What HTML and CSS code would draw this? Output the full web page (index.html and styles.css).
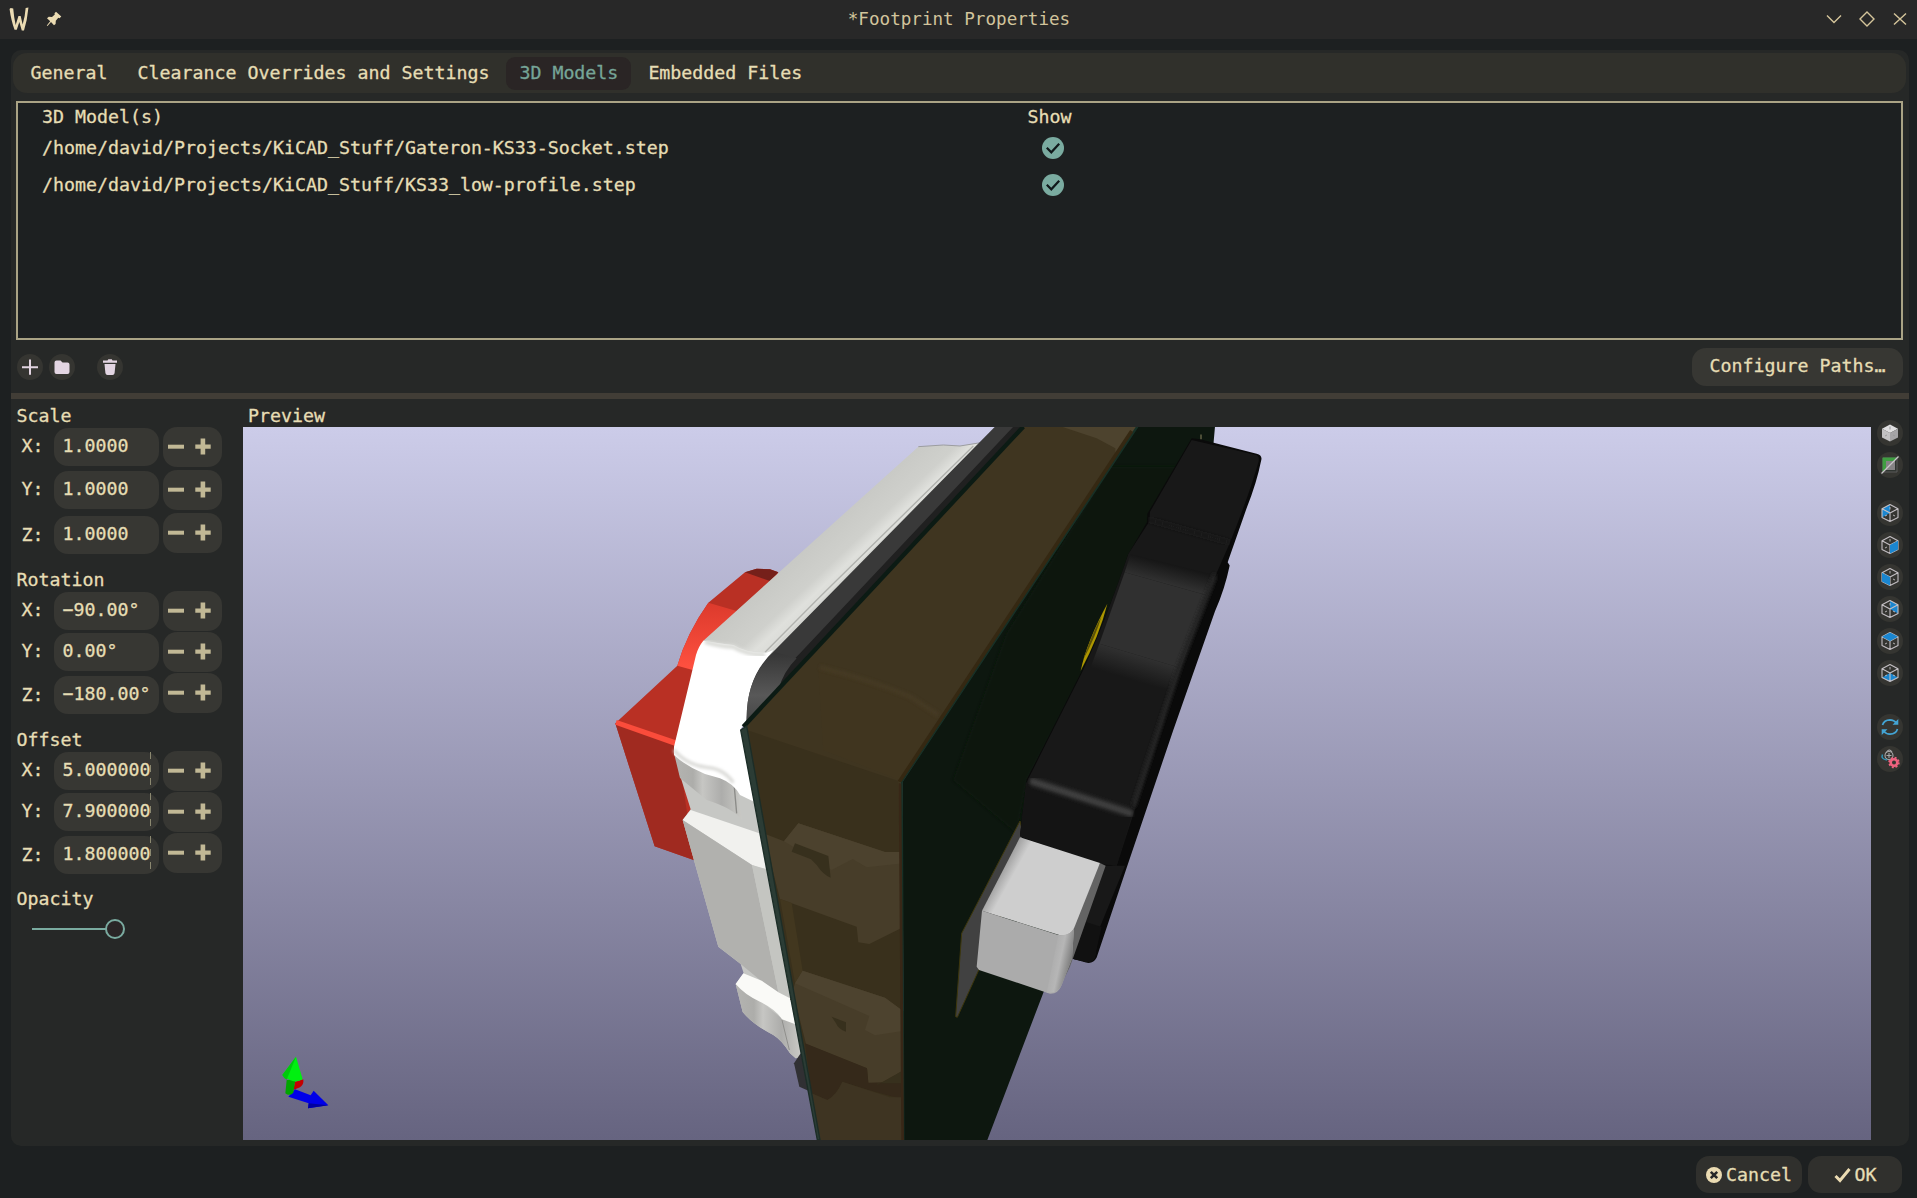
FILE: index.html
```html
<!DOCTYPE html>
<html lang="en">
<head>
<meta charset="utf-8">
<title>Footprint Properties</title>
<link rel="stylesheet" href="styles.css">
</head>
<body>
<svg class="defs" width="0" height="0">
  <defs>
    <g id="wire" fill="none" stroke="#c3bfc3" stroke-width="1.1" stroke-linejoin="round">
      <path d="M9 1L17 5.2V14L9 18L1 14V5.2ZM1 5.2L9 9.5L17 5.2M9 9.5V18"/>
      <path d="M9 3.500V6M4 12.500L6 11.500M12 11.500L14 12.500" stroke-width=".9"/>
    </g>
    <g id="minus"><path d="M0 6.7H16V10.7H0Z"/></g>
    <g id="plus"><path d="M5.6 0.5H10.2V6.5H15.7V10.7H10.2V16.5H5.6V10.7H.3V6.5H5.6Z"/></g>
  </defs>
</svg>
<header class="titlebar">
  <div class="title-left">
    <svg width="20" height="25" viewBox="0 0 18 25" preserveAspectRatio="none"><path d="M1.500 1L3.800 1.500Q4.500 11 6 18L8.500 9H10.500L12.300 17.500Q14.500 9 15 1L17.500 .5Q16.500 13 13.500 23.500H11.500L9.300 15L7 22.800H5Q2 14 .5 2Z" fill="#ebdbb2"/></svg>
    <svg width="16" height="16" viewBox="0 0 16 16"><path d="M10 .7L15.300 5.500L13.500 7.200L12.300 6.800L9.800 9.700L9.600 13L8 14.200L5 11L1.500 15L.8 14.500L4.200 10.300L1 7.300L2.800 5.800L6 6L8.800 3.400L8.500 2.200Z" fill="#ebdbb2"/></svg>
  </div>
  <h1>*Footprint Properties</h1>
  <div class="title-right">
    <svg width="16" height="16" viewBox="0 0 16 16"><path d="M1 4.500L8 11.500L15 4.500"/></svg>
    <svg width="16" height="16" viewBox="0 0 16 16"><path d="M8 1L15 8L8 15L1 8Z"/></svg>
    <svg width="16" height="16" viewBox="0 0 16 16"><path d="M2 2.500L14 13.500M14 2.500L2 13.500"/></svg>
  </div>
</header>
<main class="notebook">
  <nav class="tabs">
    <span class="tab">General</span>
    <span class="tab">Clearance Overrides and Settings</span>
    <span class="tab active">3D Models</span>
    <span class="tab">Embedded Files</span>
  </nav>
  <section class="models">
    <div class="mrow head"><span>3D Model(s)</span><span>Show</span></div>
    <div class="mrow"><span>/home/david/Projects/KiCAD_Stuff/Gateron-KS33-Socket.step</span><svg class="check" viewBox="0 0 22 22"><circle cx="11" cy="11" r="11"/><path d="M4.800 10.800L9.300 15.300L17.200 6.800"/></svg></div>
    <div class="mrow"><span>/home/david/Projects/KiCAD_Stuff/KS33_low-profile.step</span><svg class="check" viewBox="0 0 22 22"><circle cx="11" cy="11" r="11"/><path d="M4.800 10.800L9.300 15.300L17.200 6.800"/></svg></div>
  </section>
  <section class="actions">
    <button class="round"><svg viewBox="0 0 26 26"><path d="M12 5.500H14V12.200H21V14.200H14V20.800H12V14.200H5V12.200H12Z"/></svg></button>
    <button class="round"><svg viewBox="0 0 26 26"><path d="M5.500 8.500Q5.500 6.500 7.500 6.500H11.500L13.500 8.500H18.500Q20.500 8.500 20.500 10.500V18Q20.500 20 18.500 20H7.500Q5.500 20 5.500 18Z"/></svg></button>
    <button class="round trash"><svg viewBox="0 0 26 26"><path d="M6 6.500H10.500L11.300 5.200H14.800L15.500 6.500H20V8.800H6ZM7.500 10H18.500L17.600 19Q17.400 21 15.500 21H10.500Q8.600 21 8.400 19Z"/></svg></button>
    <button class="configure">Configure Paths…</button>
  </section>
  <div class="sash"></div>
  <section class="lower">
    <aside class="params">
      <h2>Scale</h2>
      <div class="group scale">
        <div class="prow"><label>X:</label><div class="field">1.0000</div><div class="spin"><svg viewBox="0 0 16 17"><use href="#minus"/></svg><svg viewBox="0 0 16 17"><use href="#plus"/></svg></div></div>
        <div class="prow"><label>Y:</label><div class="field">1.0000</div><div class="spin"><svg viewBox="0 0 16 17"><use href="#minus"/></svg><svg viewBox="0 0 16 17"><use href="#plus"/></svg></div></div>
        <div class="prow last"><label>Z:</label><div class="field">1.0000</div><div class="spin"><svg viewBox="0 0 16 17"><use href="#minus"/></svg><svg viewBox="0 0 16 17"><use href="#plus"/></svg></div></div>
      </div>
      <h2>Rotation</h2>
      <div class="group">
        <div class="prow"><label>X:</label><div class="field">−90.00°</div><div class="spin"><svg viewBox="0 0 16 17"><use href="#minus"/></svg><svg viewBox="0 0 16 17"><use href="#plus"/></svg></div></div>
        <div class="prow"><label>Y:</label><div class="field">0.00°</div><div class="spin"><svg viewBox="0 0 16 17"><use href="#minus"/></svg><svg viewBox="0 0 16 17"><use href="#plus"/></svg></div></div>
        <div class="prow last"><label>Z:</label><div class="field">−180.00°</div><div class="spin"><svg viewBox="0 0 16 17"><use href="#minus"/></svg><svg viewBox="0 0 16 17"><use href="#plus"/></svg></div></div>
      </div>
      <h2>Offset</h2>
      <div class="group">
        <div class="prow"><label>X:</label><div class="field clip">5.000000</div><div class="spin"><svg viewBox="0 0 16 17"><use href="#minus"/></svg><svg viewBox="0 0 16 17"><use href="#plus"/></svg></div></div>
        <div class="prow"><label>Y:</label><div class="field clip">7.900000</div><div class="spin"><svg viewBox="0 0 16 17"><use href="#minus"/></svg><svg viewBox="0 0 16 17"><use href="#plus"/></svg></div></div>
        <div class="prow last"><label>Z:</label><div class="field clip">1.800000</div><div class="spin"><svg viewBox="0 0 16 17"><use href="#minus"/></svg><svg viewBox="0 0 16 17"><use href="#plus"/></svg></div></div>
      </div>
      <h2>Opacity</h2>
      <div class="slider"><i class="track"></i><i class="knob"></i></div>
    </aside>
    <div class="preview">
      <h2>Preview</h2>
      <svg class="scene" viewBox="243 427 1628 713" preserveAspectRatio="none">
        <defs>
          <linearGradient id="sky" x1="0" y1="0" x2="0" y2="1"><stop offset="0" stop-color="#cccce9"/><stop offset="1" stop-color="#666480"/></linearGradient>
          <linearGradient id="ridge" gradientUnits="userSpaceOnUse" x1="690" y1="340" x2="850" y2="510"><stop offset="0" stop-color="#c8c9c5"/><stop offset=".38" stop-color="#cfd0cc"/><stop offset=".52" stop-color="#dfe0dc"/><stop offset=".75" stop-color="#d8d9d5"/><stop offset="1" stop-color="#c2c3bf"/></linearGradient>
          <linearGradient id="cap" x1="0" y1="0" x2="0" y2="1"><stop offset="0" stop-color="#dc3a2c"/><stop offset="1" stop-color="#ff5140"/></linearGradient>
          <linearGradient id="fold" x1="0" y1="0" x2="1" y2="0"><stop offset="0" stop-color="#b4b4b1"/><stop offset=".28" stop-color="#adadaa"/><stop offset=".42" stop-color="#c6c6c3"/><stop offset=".7" stop-color="#adadab"/><stop offset="1" stop-color="#c9c9c5"/></linearGradient>
          <linearGradient id="bend" x1="0" y1="0" x2="0" y2="1"><stop offset="0" stop-color="#353535"/><stop offset=".6" stop-color="#585858"/><stop offset="1" stop-color="#454545"/></linearGradient>
          <linearGradient id="fadeup" gradientUnits="userSpaceOnUse" x1="518" y1="378" x2="507" y2="428"><stop offset="0" stop-color="#161616"/><stop offset="1" stop-color="#303030"/></linearGradient>
          <linearGradient id="fadedown" gradientUnits="userSpaceOnUse" x1="420" y1="616" x2="403" y2="681"><stop offset="0" stop-color="#303030"/><stop offset="1" stop-color="#181818"/></linearGradient>
          <linearGradient id="prongtop" gradientUnits="userSpaceOnUse" x1="1225" y1="1340" x2="1270" y2="1365"><stop offset="0" stop-color="#8e8e8e"/><stop offset="1" stop-color="#cecece"/></linearGradient>
          <linearGradient id="prongside" gradientUnits="userSpaceOnUse" x1="1370" y1="1640" x2="1440" y2="1655"><stop offset="0" stop-color="#a9a9a9"/><stop offset=".5" stop-color="#b6b6b6"/><stop offset="1" stop-color="#777"/></linearGradient>
          <filter id="soft"><feGaussianBlur stdDeviation="5"/></filter>
        </defs>
        <rect x="243" y="427" width="1628" height="713" fill="url(#sky)"/>
        <g transform="translate(590 420) scale(.33333)">
          <!-- red key stem -->
          <path d="M262 737Q290 640 355 548L465 457L500 446L540 448L565 457L420 760L400 1300L311 1320L194 1279L76 910Z" fill="#b93024"/>
          <path d="M465 457L500 446L540 448L565 457L540 483Z" fill="#75201a"/>
          <path d="M355 548L440 573L340 665L308 750L262 737Q290 640 355 548Z" fill="url(#cap)"/>
          <path d="M76 910L260 970L280 1100L311 1320L194 1279Z" fill="#a02a20"/>
          <path d="M80 900L262 962V980L76 914Z" fill="#fa4c3b"/>
          <!-- white housing -->
          <path d="M340 662L985 80L1060 75L1110 78L1172 68L1180 90L545 720L440 700Z" fill="url(#ridge)"/>
          <path d="M985 80L1060 75L1110 78L1172 68" fill="none" stroke="#9c9da0" stroke-width="3"/>
          <path d="M1150 78L690 530L525 697" fill="none" stroke="#b0b1ad" stroke-width="4"/>
          <path d="M1165 82L530 708" fill="none" stroke="#d4d5d1" stroke-width="10"/>
          <path d="M268 1060L302 1168L278 1200L385 1580L452 1632L461 1660L437 1692L458 1776Q490 1815 550 1845Q575 1860 600 1900L617 1915L632 1912L640 1700L520 1200L490 1080Z" fill="#c6c7c4"/>
          <path d="M252 1000L340 1050L440 1090L456 1200Q430 1165 350 1140L270 1074Z" fill="url(#fold)"/>
          <path d="M432 1090L440 1180" stroke="#8b8b88" stroke-width="4"/>
          <path d="M340 662Q390 670 430 675Q470 700 530 698L550 690Q475 780 470 900L452 928L492 1145L450 1125Q430 1090 390 1075L345 1062Q290 1040 252 1005V980L318 705Q325 680 340 662Z" fill="#fff"/>
          <path d="M252 990Q290 1035 350 1042Q400 1045 430 1088" fill="none" stroke="#d9d9d6" stroke-width="10" filter="url(#soft)"/>
          <path d="M345 665Q395 680 430 680Q470 704 525 704" fill="none" stroke="#dcddd9" stroke-width="14" filter="url(#soft)"/>
          <path d="M302 1170L508 1240L528 1350L486 1335L278 1200Z" fill="#f1f1ee"/>
          <path d="M278 1200L486 1335L565 1717L510 1680L452 1632L385 1580Z" fill="#b1b1ae"/>
          <path d="M486 1335L528 1347L602 1735L565 1717Z" fill="#c4c5c1"/>
          <path d="M437 1692L458 1776Q490 1815 550 1845Q575 1860 600 1900L617 1915L632 1912L612 1810L575 1795L500 1735Z" fill="url(#fold)"/>
          <path d="M460 1660L437 1692Q465 1725 510 1745Q560 1770 576 1798L616 1813L600 1735L565 1717L515 1682Z" fill="#fafaf7"/>
          <path d="M576 1800L598 1890" stroke="#8f8f8c" stroke-width="3"/>
          <!-- dark gasket -->
          <path d="M470 895Q470 765 555 690L1215 20H1300L470 920Z" fill="#393939"/>
          <path d="M1270 20H1300L560 810Q575 750 630 700Z" fill="#202020"/>
          <path d="M470 895Q470 765 555 696L620 715Q580 755 565 810L470 912Z" fill="url(#bend)"/>
          <path d="M612 1930L632 1900L662 2015L628 2000Z" fill="#303033"/>
          <!-- board edge -->
          <path d="M460 928L1300 20H1642L932 1085L942 2160H685Z" fill="#3f3520"/>
          <path d="M470 930L925 1083L942 2160H685Z" fill="#39301c"/>
          <path d="M685 740Q820 780 955 830L1045 890L930 1080L700 990Z" fill="#42361f" opacity=".7"/>
          <path d="M690 742Q840 780 960 830L1045 885" fill="none" stroke="#493c26" stroke-width="14" opacity=".6" filter="url(#soft)"/>
          <path d="M1415 20H1642L1577 118L1576 85L1520 55Z" fill="#4d432e"/>
          <path d="M526 1242L582 1264L625 1210L885 1296H942V1520L838 1572L805 1567L800 1520L570 1437L548 1350Z" fill="#473d29"/>
          <path d="M625 1210L885 1296H942V1330L830 1342L788 1317L725 1350L582 1264Z" fill="#4c422e"/>
          <path d="M605 1295L615 1270L715 1308L722 1373Q700 1365 680 1335L663 1318Z" fill="#37301d"/>
          <path d="M570 1437L605 1449L638 1652L615 1690Z" fill="#42371f"/>
          <path d="M638 1652L885 1733L942 1775V1950L862 1995L835 1988L831 1945L648 1872L615 1740L600 1740L615 1690Z" fill="#473d29"/>
          <path d="M638 1652L885 1733L942 1775V1832L855 1846L825 1830L838 1788L615 1690Z" fill="#4d432f"/>
          <path d="M725 1790L768 1807V1835Q745 1828 738 1810Z" fill="#37301d"/>
          <path d="M645 1870L831 1945L835 1988L942 1985V2037Q870 2022 757 1985Q735 2030 712 2040L665 2020Z" fill="#35291a"/>
          <path d="M862 1995L942 1950V1990H862Z" fill="#37301d"/>
          <path d="M665 2020L712 2040Q740 2025 757 1985L900 2032H942V2160H685Z" fill="#3e3422"/>
          <path d="M460 920L1300 20" stroke="#0c1b14" stroke-width="13"/>
          <path d="M452 930L470 918L690 2160H682Z" fill="#2b3c35" stroke="#1c2d27" stroke-width="4"/>
          <!-- board face -->
          <path d="M937 1085L1642 20H1875L1850 300L1600 1100L1360 1718L1192 2160H942Z" fill="#0d170f"/>
          <path d="M1250 640L1560 140L1820 140L1480 760L1310 1080L1280 1240L1090 1080Z" fill="#11190e" opacity=".75" filter="url(#soft)"/>
          <path d="M940 2160L935 1085L1642 20" fill="none" stroke="#173026" stroke-width="7"/>
          <path d="M928 1085L1625 33" fill="none" stroke="#352812" stroke-width="11"/>
          <path d="M930 1090L938 2160" fill="none" stroke="#382717" stroke-width="8"/>
          <path d="M1290 1203L1115 1540L1097 1790L1102 1792L1180 1620L1310 1290Z" fill="#414141" stroke="#3d370c" stroke-width="3"/>
        </g>
        <g transform="translate(1000 420) scale(.33333 .38265)">
          <!-- black socket -->
          <path d="M575 48L600 50L770 88Q787 92 784 104Q770 165 740 230L683 372L689 380Q675 440 645 500L520 810L380 1170L290 1405Q280 1422 258 1418L217 1408L180 1200L60 1085L80 940L240 665Q310 540 385 350L442 265V245Z" fill="#0a0a0a"/>
          <path d="M575 52L765 91Q780 94 776 108Q750 190 690 320L650 400L540 650L400 1030L350 1165L300 1160L60 1088L78 950L130 860L245 662Q310 540 385 350L448 265L450 240Z" fill="#181818"/>
          <path d="M80 950L395 1035L350 1165L300 1160L60 1088Z" fill="#141414"/>
          <path d="M392 350L645 405L620 458L374 398Z" fill="url(#fadeup)"/>
          <path d="M374 398L620 458L542 648L298 585Z" fill="#303030"/>
          <path d="M298 585L542 648L520 705L260 675Z" fill="url(#fadedown)"/>
          <path d="M445 260L690 320" stroke="#1b1b1b" stroke-width="8" filter="url(#soft)"/>
          <path d="M98 945L390 1027" stroke="#424242" stroke-width="18" stroke-linecap="round" filter="url(#soft)"/>
          <path d="M645 405L540 640L400 1010" fill="none" stroke="#222" stroke-width="16" filter="url(#soft)"/>
          <path d="M315 1165H375L300 1325L285 1405Q275 1420 258 1416L217 1408Z" fill="#181818"/>
          <path d="M258 1312L305 1325L283 1408Q275 1420 258 1416L217 1408Z" fill="#111"/>
          <path d="M242 655Q260 580 322 480Q300 560 242 655Z" fill="#ad9600"/>
          <path d="M250 625Q275 560 305 512Q285 570 250 625Z" fill="#5c5208"/>
          <path d="M603 38V50" stroke="#8c8660" stroke-width="3"/>
        </g>
        <g transform="translate(590 420) scale(.33333)">
          <!-- alignment post -->
          <path d="M1530 1329L1547 1337L1440 1640L1410 1700L1380 1600Z" fill="#646464"/>
          <path d="M1290 1252L1530 1329L1452 1525Q1440 1550 1410 1546L1176 1472Z" fill="url(#prongtop)"/>
          <path d="M1176 1472L1405 1545Q1440 1550 1452 1525L1446 1615L1415 1695Q1405 1722 1380 1721L1167 1650L1160 1640Z" fill="#ababab"/>
          <path d="M1405 1545Q1440 1550 1452 1525L1446 1615L1415 1695Q1405 1722 1370 1718Z" fill="url(#prongside)"/>
        </g>
        <g transform="translate(240 1030) scale(.33333)">
          <!-- axis gizmo -->
          <path d="M165 155L190 148Q192 165 180 172L160 180Z" fill="#c40000"/>
          <path d="M145 200L165 178L212 196L221 182L265 226L204 235L206 220Z" fill="#0000e8"/>
          <path d="M206 220L265 226L204 235Z" fill="#0000a0"/>
          <path d="M140 150H166L160 188Q148 200 136 190Z" fill="#00a500"/>
          <path d="M168 80L188 148Q160 165 127 135Z" fill="#00f010"/>
          <path d="M168 80L127 135Q131 144 140 149Z" fill="#00c80c"/>
        </g>
      </svg>
    </div>
    <aside class="viewbar">
      <button class="round"><svg viewBox="-4 -3.500 26 26"><path d="M9 1L17 5.200L9 9.500L1 5.200Z" fill="#e0dfe0"/><path d="M1 5.200L9 9.500V18L1 14Z" fill="#c2c1c2"/><path d="M17 5.200L9 9.500V18L17 14Z" fill="#a5a4a6"/><path d="M9 3V6M4 12.500L6 11.500M12 11.500L14 12.500" stroke="#999" fill="none"/></svg></button>
      <button class="round"><svg viewBox="0 0 26 26"><path d="M6 6H20V20H6Z" fill="#303531" stroke="#5b5b5b"/><path d="M5.500 5.500H20L16.500 9H9V16.500L5.500 20Z" fill="#3f9e42"/><path d="M9 9H18V18H9Z" fill="#858385"/><path d="M4.500 21.500L21.500 4.500" stroke="#c9c5c9" stroke-width="1.300"/></svg></button>
      <button class="round gap1"><svg viewBox="-4 -3.500 26 26"><path d="M9 1V9.500L1 14V5.200Z" fill="#1a86d0"/><use href="#wire"/></svg></button>
      <button class="round"><svg viewBox="-4 -3.500 26 26"><use href="#wire"/><path d="M9 9.500L17 5.200V14L9 18Z" fill="#1a86d0"/></svg></button>
      <button class="round"><svg viewBox="-4 -3.500 26 26"><use href="#wire"/><path d="M1 5.200L9 9.500V18L1 14Z" fill="#1a86d0"/></svg></button>
      <button class="round"><svg viewBox="-4 -3.500 26 26"><path d="M9 1V9.500L17 14V5.200Z" fill="#1a86d0"/><use href="#wire"/></svg></button>
      <button class="round"><svg viewBox="-4 -3.500 26 26"><use href="#wire"/><path d="M9 1L17 5.200L9 9.500L1 5.200Z" fill="#1a86d0"/></svg></button>
      <button class="round"><svg viewBox="-4 -3.500 26 26"><path d="M9 9.500L17 14L9 18L1 14Z" fill="#1a86d0"/><use href="#wire"/></svg></button>
      <button class="round gap2"><svg viewBox="0 0 26 26"><g fill="none" stroke="#43a4d4" stroke-width="1.700"><path d="M5.500 11Q7 6 13 5.800Q17 6 19.500 9M20.500 15Q19 20 13 20.200Q9 20 6.500 17"/></g><path d="M21.300 5V10.800H15.500ZM4.700 21V15.200H10.500Z" fill="#43a4d4"/></svg></button>
      <button class="round"><svg viewBox="0 0 26 26"><g fill="none" stroke="#a9a9a9" stroke-width="1.100"><circle cx="12" cy="9.500" r="4"/><path d="M9 7Q12 1.500 15 6M9.500 9.500H14.500M12 7V12"/></g><path d="M5.500 8.500Q3.500 13 10 14" fill="none" stroke="#2e93b4" stroke-width="1.500"/><circle cx="17" cy="16.500" r="3.300" fill="none" stroke="#f0627f" stroke-width="2.600"/><circle cx="17" cy="16.500" r="4.900" fill="none" stroke="#f0627f" stroke-width="1.600" stroke-dasharray="2 1.850"/></svg></button>
    </aside>
  </section>
</main>
<footer class="dialog-buttons">
  <button class="cancel"><svg width="16" height="16" viewBox="0 0 16 16"><circle cx="8" cy="8" r="8" fill="#ebdbb2"/><path d="M4.800 4.800L11.200 11.200M11.200 4.800L4.800 11.200" stroke="#282828" stroke-width="2.600"/></svg>Cancel</button>
  <button class="ok"><svg width="17" height="16" viewBox="0 0 17 16"><path d="M1.500 9L6 13.500L15.500 2" fill="none" stroke="#ebdbb2" stroke-width="3"/></svg>OK</button>
</footer>
</body>
</html>
```
FILE: styles.css
```css
* { box-sizing: border-box; }
body {
  margin: 0;
  width: 1917px;
  height: 1198px;
  overflow: hidden;
  display: flex;
  flex-direction: column;
  background: #1d2021;
  color: #e6ddb4;
  font: 18.27px/22px "DejaVu Sans Mono", "Liberation Mono", monospace;
  -webkit-text-stroke: .3px currentColor;
}
.defs { position: absolute; }
svg { display: block; }
h1, h2 { margin: 0; font-size: inherit; font-weight: 400; }
button {
  border: 0;
  padding: 0;
  color: inherit;
  font: inherit;
  background: #373733;
}

.titlebar {
  flex: none;
  height: 39px;
  display: grid;
  grid-template-columns: 1fr auto 1fr;
  align-items: center;
  padding: 0 9px;
  background: #282828;
}
.title-left { display: flex; align-items: center; gap: 17px; }
.title-left svg:last-child { margin-top: -2px; }
.titlebar h1 { padding: 0 0 2px 1px; font-size: 17.6px; color: #d2c49c; -webkit-text-stroke-width: 0; }
.title-right { display: flex; justify-content: flex-end; gap: 17px; padding-bottom: 1px; }
.title-right path { fill: none; stroke: #d5c59b; stroke-width: 1.4; }

.notebook {
  flex: none;
  width: 1898px;
  height: 1096px;
  margin: 11px 0 0 11px;
  border-radius: 10px;
  background: #262827;
  display: flex;
  flex-direction: column;
}
.tabs {
  flex: none;
  display: flex;
  align-items: center;
  gap: 4px;
  height: 40px;
  margin: 3px 3px 0 2px;
  padding-left: 4.5px;
  border-radius: 14px;
  background: #30302b;
}
.tab { height: 33px; line-height: 31px; padding: 0 13px; border-radius: 9px; }
.tab.active { background: #2a2525; color: #76a598; }

.models {
  flex: none;
  width: 1887px;
  height: 239px;
  margin: 8px 0 1px 5px;
  border: 2px solid #aaa385;
  background: #1d2021;
}
.mrow {
  display: grid;
  grid-template-columns: 985.5px 1fr;
  align-items: center;
  height: 36.5px;
  padding-left: 24px;
}
.mrow.head { height: 27px; }
.check { width: 22px; height: 22px; margin-left: 14px; }
.check circle { fill: #7aaba0; }
.check path { fill: none; stroke: #10181a; stroke-width: 2.2; }

.actions {
  flex: none;
  display: flex;
  align-items: center;
  gap: 6px;
  height: 52px;
  padding: 0 6px;
}
.round { width: 26px; height: 26px; border-radius: 50%; background: #353531; }
.round svg { width: 26px; height: 26px; }
.actions .round path { fill: #e3d5e2; }
.actions .trash { margin-left: 16px; }
.configure {
  width: 211px;
  height: 38px;
  margin-left: auto;
  padding-bottom: 2px;
  border-radius: 14px;
}
.sash { flex: none; height: 6px; background: #413d36; }

.lower { flex: 1; display: flex; min-height: 0; }
.params { width: 232px; padding: 6px 0 0 5px; }
.params h2 { height: 22px; padding-left: .5px; }
.group { display: flex; flex-direction: column; gap: 1px; margin-bottom: 15.5px; }
.group.scale { gap: 3px; margin-bottom: 16px; }
.prow { display: flex; align-items: flex-start; height: 40px; }
.prow label { width: 38px; padding: 8px 0 0 5.5px; }
.prow .field {
  position: relative;
  width: 105px;
  height: 38px;
  margin-top: 1px;
  padding-left: 8.5px;
  line-height: 36px;
  border-radius: 14px;
  background: #373733;
}
.prow.last label { padding-top: 11px; }
.prow.last .field { margin-top: 3px; }
.field.clip::after {
  content: "";
  position: absolute;
  left: 96px;
  top: 0;
  width: 1px;
  height: 34px;
  background: repeating-linear-gradient(#8b8870 0 7px, transparent 7px 13px);
}
.spin {
  display: flex;
  gap: 11px;
  width: 59px;
  height: 40px;
  margin-left: 4px;
  padding: 11px 0 0 5px;
  border-radius: 14px;
  background: #373733;
}
.spin svg { width: 16px; height: 17px; fill: #c1b895; }
.slider { display: flex; align-items: center; height: 20px; margin: 9px 0 0 16px; }
.track { width: 74px; height: 2px; background: #7aaba0; }
.knob { width: 20px; height: 20px; margin-left: -1px; border: 2px solid #7aaba0; border-radius: 50%; background: #2a2526; }

.preview { width: 1628px; padding-top: 6px; }
.preview h2 { height: 22px; padding-left: 5px; }
.scene { width: 1628px; height: 713px; }

.viewbar { display: flex; flex-direction: column; align-items: center; gap: 6px; width: 38px; padding-top: 21px; }
.viewbar .gap1 { margin-top: 16px; }
.viewbar .gap2 { margin-top: 21.5px; }

.dialog-buttons { display: flex; justify-content: flex-end; gap: 6px; padding: 10px 15px 0 0; }
.dialog-buttons button {
  display: flex;
  align-items: center;
  justify-content: center;
  gap: 4px;
  height: 37px;
  border-radius: 13px;
  background: #30302d;
}
.dialog-buttons .cancel { width: 106px; }
.dialog-buttons .ok { width: 94px; }
```
